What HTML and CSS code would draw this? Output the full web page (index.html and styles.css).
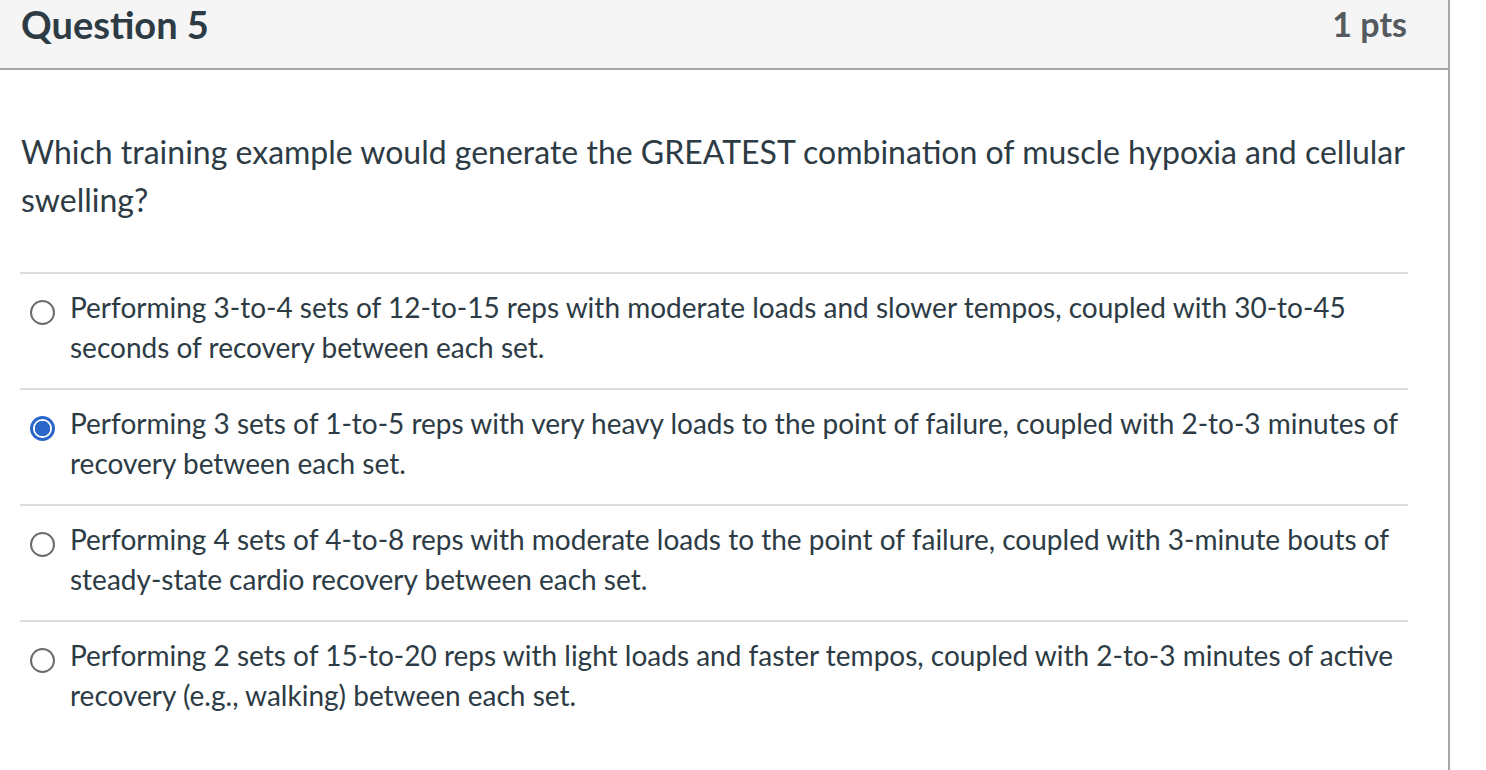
FILE: index.html
```html
<!DOCTYPE html>
<html>
<head>
<meta charset="utf-8">
<link rel="stylesheet" href="styles.css">
</head>
<body>
<div class="question">
  <div class="header">
    <h2 class="title">Question 5</h2>
    <span class="points">1 pts</span>
  </div>
  <div class="content">
    <p class="text">Which training example would generate the GREATEST combination of muscle hypoxia and cellular swelling?</p>
    <div class="answers">
      <label class="answer">
        <span class="radio"></span>
        <span class="answer-text">Performing 3-to-4 sets of 12-to-15 reps with moderate loads and slower tempos, coupled with 30-to-45 seconds of recovery between each set.</span>
      </label>
      <label class="answer">
        <span class="radio checked"></span>
        <span class="answer-text">Performing 3 sets of 1-to-5 reps with very heavy loads to the point of failure, coupled with 2-to-3 minutes of recovery between each set.</span>
      </label>
      <label class="answer">
        <span class="radio"></span>
        <span class="answer-text">Performing 4 sets of 4-to-8 reps with moderate loads to the point of failure, coupled with 3-minute bouts of steady-state cardio recovery between each set.</span>
      </label>
      <label class="answer">
        <span class="radio"></span>
        <span class="answer-text">Performing 2 sets of 15-to-20 reps with light loads and faster tempos, coupled with 2-to-3 minutes of active recovery (e.g., walking) between each set.</span>
      </label>
    </div>
  </div>
</div>
</body>
</html>
```

FILE: styles.css
```css
html, body {
  margin: 0;
  padding: 0;
  background: #ffffff;
}
body {
  font-family: Lato, "Liberation Sans", sans-serif;
  color: #2d3b45;
}
.question {
  width: 1448px;
  min-height: 770px;
  border-right: 2px solid #a5a5a5;
  box-sizing: content-box;
}
.header {
  display: flex;
  justify-content: space-between;
  align-items: center;
  height: 68px;
  background: #f5f5f5;
  border-bottom: 2px solid #a5a5a5;
  padding: 0 41px 0 21px;
}
.title {
  margin: 0;
  font-size: 38px;
  line-height: 46px;
  font-weight: 700;
  color: #2d3b45;
  position: relative;
  top: -10px;
}
.points {
  font-size: 34px;
  line-height: 46px;
  font-weight: 700;
  color: #555a5e;
  position: relative;
  top: -10px;
}
.content {
  padding: 0 40px 0 20px;
}
.text {
  margin: 58px 0 0 1px;
  font-size: 32px;
  line-height: 48px;
  color: #2d3b45;
}
.answers {
  margin-top: 48px;
}
.answer {
  display: flex;
  align-items: flex-start;
  border-top: 2px solid #dddddd;
  padding: 13px 0 21px 10px;
}
.radio {
  flex: none;
  width: 25px;
  height: 25px;
  box-sizing: border-box;
  border: 2px solid #6b6b6b;
  border-radius: 50%;
  margin-top: 13px;
  margin-right: 15px;
  background: #fff;
}
.radio.checked {
  border: 3px solid #2b66c9;
  background: radial-gradient(circle, #2b66c9 0 7.5px, #ffffff 8px);
}
.answer-text {
  font-size: 28px;
  line-height: 40px;
  color: #2d3b45;
}
```
